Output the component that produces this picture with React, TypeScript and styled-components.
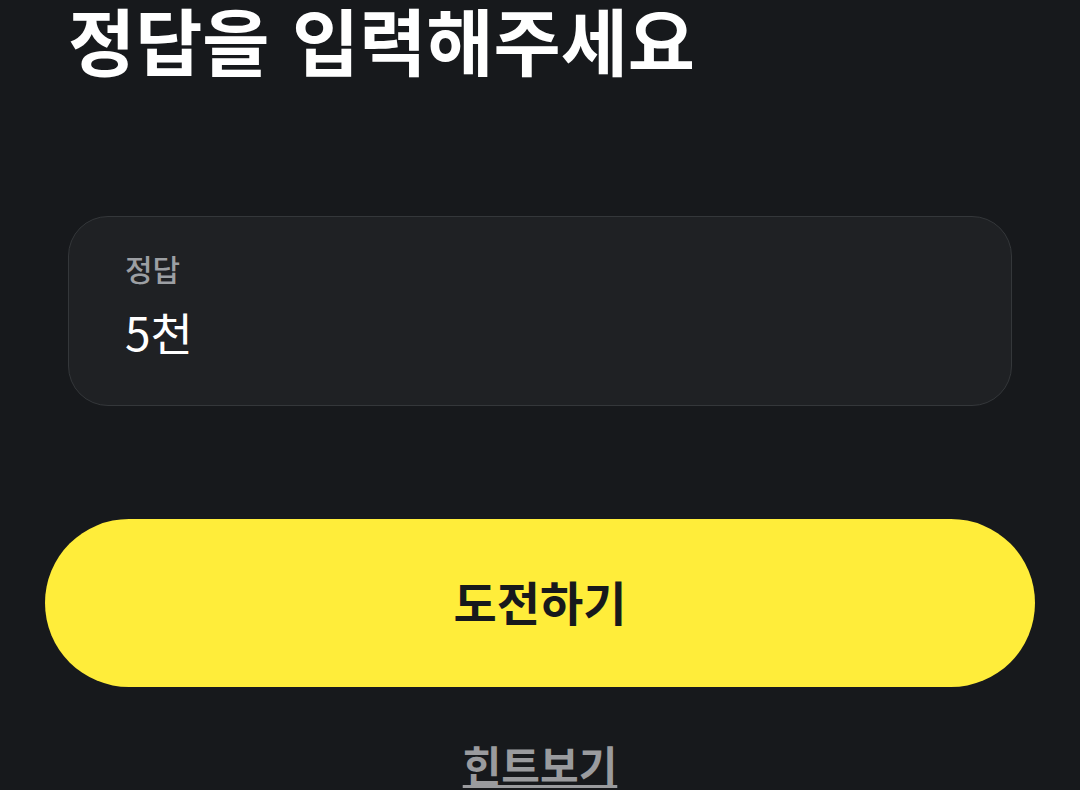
import React from 'react';
import styled, { createGlobalStyle } from 'styled-components';

const GlobalStyle = createGlobalStyle`
  html, body {
    margin: 0;
    padding: 0;
    background: #17191c;
  }
  body {
    font-family: 'Noto Sans CJK KR', 'Noto Sans', sans-serif;
    color: #ffffff;
  }
`;

const Screen = styled.main`
  width: 1080px;
  height: 790px;
  overflow: hidden;
  display: flex;
  flex-direction: column;
  align-items: center;
  background: #17191c;
`;

const Title = styled.h1`
  align-self: stretch;
  margin: 2px 0 0;
  padding-left: 68px;
  font-size: 73px;
  font-weight: 700;
  line-height: 1;
  letter-spacing: 0;
  word-spacing: 6px;
  color: #ffffff;
`;

const AnswerField = styled.label`
  box-sizing: border-box;
  width: 944px;
  height: 190px;
  margin-top: 141px;
  padding: 36px 56px 0;
  display: flex;
  flex-direction: column;
  gap: 25px;
  background: #1f2124;
  border: 1.5px solid #34373a;
  border-radius: 40px;
`;

const FieldLabel = styled.span`
  font-size: 30px;
  font-weight: 500;
  line-height: 1;
  color: #9c9fa3;
`;

const FieldValue = styled.input`
  width: 100%;
  height: 46px;
  padding: 0;
  margin: 0;
  border: none;
  outline: none;
  background: transparent;
  font-family: inherit;
  font-size: 46px;
  font-weight: 400;
  line-height: 1;
  color: #ffffff;
`;

const SubmitButton = styled.button`
  width: 990px;
  height: 168px;
  margin-top: 113px;
  padding: 0 0 6px;
  border: none;
  border-radius: 84px;
  background: #ffed3a;
  font-family: inherit;
  font-size: 47px;
  font-weight: 700;
  color: #17191c;
  cursor: pointer;
`;

const HintLink = styled.a`
  margin-top: 56px;
  font-size: 42px;
  font-weight: 700;
  line-height: 1;
  color: #9a9b9e;
  text-decoration: underline;
  text-decoration-thickness: 3px;
  text-underline-offset: 3px;
  cursor: pointer;
`;

export default function App() {
  return (
    <>
      <GlobalStyle />
      <Screen>
        <Title>정답을 입력해주세요</Title>
        <AnswerField>
          <FieldLabel>정답</FieldLabel>
          <FieldValue defaultValue="5천" readOnly />
        </AnswerField>
        <SubmitButton>도전하기</SubmitButton>
        <HintLink>힌트보기</HintLink>
      </Screen>
    </>
  );
}
